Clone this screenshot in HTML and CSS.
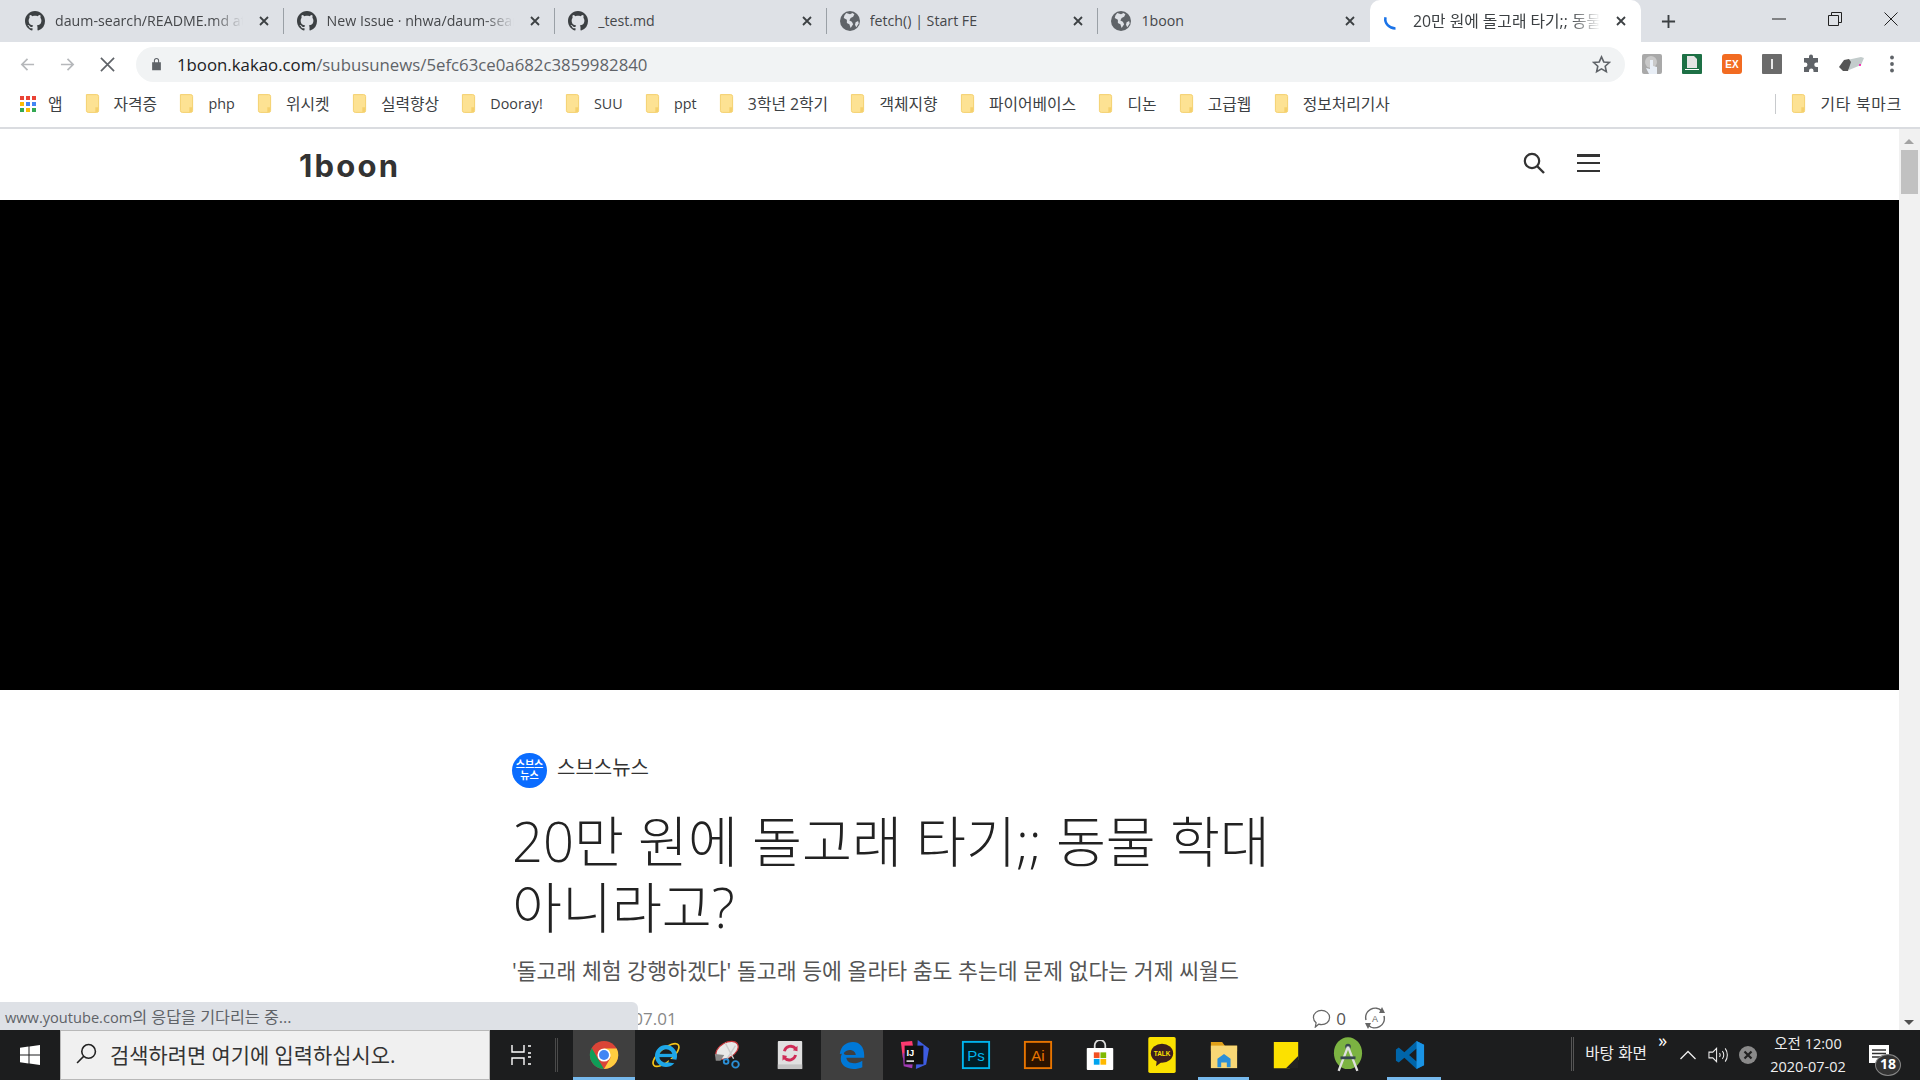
FILE: index.html
```html
<!doctype html>
<html lang="ko">
  <head>
    <meta charset="UTF-8" />
    <title>20만 원에 돌고래 타기;; 동물 학대 아니라고?</title>
    <link rel="stylesheet" href="styles.css">
  </head>
  <body>
    <svg class="defs" width="0" height="0">
      <symbol id="github" viewBox="0 0 16 16">
        <path fill="#3c4043" d="M8 0C3.58 0 0 3.58 0 8c0 3.54 2.29 6.53 5.47 7.59.4.07.55-.17.55-.38 0-.19-.01-.82-.01-1.49-2.01.37-2.53-.49-2.69-.94-.09-.23-.48-.94-.82-1.13-.28-.15-.68-.52-.01-.53.63-.01 1.08.58 1.23.82.72 1.21 1.87.87 2.33.66.07-.52.28-.87.51-1.07-1.78-.2-3.64-.89-3.64-3.95 0-.87.31-1.59.82-2.15-.08-.2-.36-1.02.08-2.12 0 0 .67-.21 2.2.82.64-.18 1.32-.27 2-.27s1.36.09 2 .27c1.53-1.04 2.2-.82 2.2-.82.44 1.1.16 1.92.08 2.12.51.56.82 1.27.82 2.15 0 3.07-1.87 3.75-3.65 3.95.29.25.54.73.54 1.48 0 1.07-.01 1.93-.01 2.2 0 .21.15.46.55.38A8.01 8.01 0 0 0 16 8c0-4.42-3.58-8-8-8z"/>
      </symbol>
      <symbol id="globe" viewBox="0 0 16 16">
        <circle cx="8" cy="8" r="8" fill="#5f6368"/>
        <path fill="#dee1e6" d="M5 1.500l3 1 2-1 1.500 1-1 2-2 1-1 2 2 1 1 2-2 3-1-3-2-1V7L3 5.500l.5-2zM12.500 9l2-1 .5 2-2 3-1-2z"/>
      </symbol>
      <symbol id="folder" viewBox="0 0 16 20">
        <path fill="#fde293" stroke="#f3cf6b" d="M1.500.5h11a2 2 0 0 1 2 2v15a2 2 0 0 1-2 2h-9a2 2 0 0 1-2-2z"/>
        <path fill="#f5d06c" d="M11 14h3v5h-3z"/>
      </symbol>
      <symbol id="close" viewBox="0 0 10 10">
        <path stroke="#3c4043" stroke-width="1.800" d="M1 1l8 8M9 1l-8 8"/>
      </symbol>
    </svg>

    <!-- tabs -->
    <div class="tabstrip">
      <div class="tab">
        <svg class="favicon"><use href="#github"/></svg>
        <span class="tab-title fade">daum-search/README.md at master</span>
        <svg class="tab-close"><use href="#close"/></svg>
      </div>
      <div class="tab">
        <svg class="favicon"><use href="#github"/></svg>
        <span class="tab-title fade">New Issue · nhwa/daum-search</span>
        <svg class="tab-close"><use href="#close"/></svg>
      </div>
      <div class="tab">
        <svg class="favicon"><use href="#github"/></svg>
        <span class="tab-title">_test.md</span>
        <svg class="tab-close"><use href="#close"/></svg>
      </div>
      <div class="tab">
        <svg class="favicon"><use href="#globe"/></svg>
        <span class="tab-title">fetch() | Start FE</span>
        <svg class="tab-close"><use href="#close"/></svg>
      </div>
      <div class="tab last">
        <svg class="favicon"><use href="#globe"/></svg>
        <span class="tab-title">1boon</span>
        <svg class="tab-close"><use href="#close"/></svg>
      </div>
      <div class="tab active">
        <svg class="favicon" viewBox="0 0 16 16"><path fill="none" stroke="#1a73e8" stroke-width="2" d="M2 5c-1 5 3 9 8 9"/></svg>
        <span class="tab-title fade ko">20만 원에 돌고래 타기;; 동물 학대 아니라고?</span>
        <svg class="tab-close"><use href="#close"/></svg>
      </div>
      <svg class="new-tab" viewBox="0 0 16 16"><path stroke="#3c4043" stroke-width="2" d="M8 1v14M1 8h14"/></svg>
      <div class="window-controls">
        <svg viewBox="0 0 14 14"><path stroke="#222" d="M0 7h14"/></svg>
        <svg viewBox="0 0 14 14"><path fill="none" stroke="#222" d="M.500 3.500h10v10H.500zM3.500 3.500v-3h10v10h-3"/></svg>
        <svg viewBox="0 0 14 14"><path stroke="#222" d="M.500.500l13 13M13.500.500l-13 13"/></svg>
      </div>
    </div>

    <!-- toolbar -->
    <div class="toolbar">
      <svg class="nav-icon" viewBox="0 0 16 16"><path fill="none" stroke="#b6b8bb" stroke-width="1.800" d="M15 8H2M8 2L2 8l6 6"/></svg>
      <svg class="nav-icon" viewBox="0 0 16 16"><path fill="none" stroke="#b6b8bb" stroke-width="1.800" d="M1 8h13M8 2l6 6-6 6"/></svg>
      <svg class="nav-icon" viewBox="0 0 16 16"><path stroke="#5f6368" stroke-width="1.800" d="M1 1l14 14M15 1L1 15"/></svg>
      <div class="omnibox">
        <svg class="lock" viewBox="0 0 12 16"><path fill="#5f6368" d="M1 6h10v9H1zM3 6V4a3 3 0 0 1 6 0v2H7.800V4a1.800 1.800 0 0 0-3.600 0v2z"/></svg>
        <span class="url"><b>1boon.kakao.com</b>/subusunews/5efc63ce0a682c3859982840</span>
        <svg class="star" viewBox="0 0 20 20"><path fill="none" stroke="#5f6368" stroke-width="1.700" d="M10 2l2.400 5.300 5.800.6-4.300 3.900 1.200 5.700L10 14.600l-5.100 2.900 1.200-5.700L1.800 7.900l5.800-.6z"/></svg>
      </div>
      <div class="extensions">
        <svg viewBox="0 0 20 20"><rect width="20" height="20" rx="2" fill="#a9a9a9"/><circle cx="9" cy="8" r="6" fill="#c9c9c9"/><path fill="#e8eef6" d="M8 6h3v6l4 1v7H7l-3-6 4 1z"/></svg>
        <svg viewBox="0 0 20 20"><rect width="20" height="20" rx="1" fill="#1d7045"/><path fill="#e4e4e4" d="M5 2h7l3 3v9H5z"/><path fill="#fff" d="M3 15h14v1H3z"/></svg>
        <svg viewBox="0 0 20 20"><rect width="20" height="20" rx="3" fill="#f26b21"/><text class="ext-text" x="10" y="13.500">EX</text></svg>
        <svg viewBox="0 0 20 20"><rect width="20" height="20" rx="1" fill="#6b6b6b"/><path fill="#e8e8e8" d="M9 5h2v10H9z"/></svg>
        <svg viewBox="0 0 20 20"><path fill="#5f6368" d="M7 2.500a2 2 0 0 1 4 0V4h5v4.500h-1.500a2.200 2.200 0 0 0 0 4.500H16v5h-4.500v-1.200a2.200 2.200 0 0 0-4.500 0V18H2v-5h1.200a2.200 2.200 0 0 0 0-4.500H2V4h5z"/></svg>
        <svg class="wide" viewBox="0 0 26 16"><path fill="#c3cccc" d="M8 4l14-3 3 1-3 7-12 5z"/><path fill="#555" d="M0 11l5-7 5-1 2 3-3 9-5 0z"/><circle cx="21" cy="9" r="1" fill="#f0a"/></svg>
        <svg viewBox="0 0 20 20"><g fill="#5f6368"><circle cx="10" cy="3.500" r="1.900"/><circle cx="10" cy="10" r="1.900"/><circle cx="10" cy="16.500" r="1.900"/></g></svg>
      </div>
    </div>

    <!-- bookmarks -->
    <div class="bookmarks">
      <div class="apps">
        <i class="r"></i><i class="r"></i><i class="r"></i>
        <i class="y"></i><i class="b"></i><i class="b"></i>
        <i class="g"></i><i class="y"></i><i class="g"></i>
      </div>
      <span class="apps-label ko">앱</span>
      <div class="bookmark ko"><svg class="folder"><use href="#folder"/></svg>자격증</div>
      <div class="bookmark"><svg class="folder"><use href="#folder"/></svg>php</div>
      <div class="bookmark ko"><svg class="folder"><use href="#folder"/></svg>위시켓</div>
      <div class="bookmark ko"><svg class="folder"><use href="#folder"/></svg>실력향상</div>
      <div class="bookmark"><svg class="folder"><use href="#folder"/></svg>Dooray!</div>
      <div class="bookmark"><svg class="folder"><use href="#folder"/></svg>SUU</div>
      <div class="bookmark"><svg class="folder"><use href="#folder"/></svg>ppt</div>
      <div class="bookmark ko"><svg class="folder"><use href="#folder"/></svg>3학년 2학기</div>
      <div class="bookmark ko"><svg class="folder"><use href="#folder"/></svg>객체지향</div>
      <div class="bookmark ko"><svg class="folder"><use href="#folder"/></svg>파이어베이스</div>
      <div class="bookmark ko"><svg class="folder"><use href="#folder"/></svg>디논</div>
      <div class="bookmark ko"><svg class="folder"><use href="#folder"/></svg>고급웹</div>
      <div class="bookmark ko"><svg class="folder"><use href="#folder"/></svg>정보처리기사</div>
      <div class="bookmark other ko"><svg class="folder"><use href="#folder"/></svg>기타 북마크</div>
    </div>

    <!-- page -->
    <div class="viewport">
      <main class="page">
        <header class="site-header">
          <span class="logo">1boon</span>
          <div class="site-icons">
            <svg class="search-icon" viewBox="0 0 22 22"><circle cx="9" cy="9" r="7.200" fill="none" stroke="#333" stroke-width="2.200"/><path stroke="#333" stroke-width="2.400" d="M14 14l7 7"/></svg>
            <div class="hamburger"><i></i><i></i><i></i></div>
          </div>
        </header>
        <div class="video"></div>
        <article class="article">
          <div class="source">
            <div class="source-logo">스브스<br>뉴스</div>
            <span class="source-name">스브스뉴스</span>
          </div>
          <h1 class="title">20만 원에 돌고래 타기;; 동물 학대 아니라고?</h1>
          <p class="subtitle">'돌고래 체험 강행하겠다' 돌고래 등에 올라타 춤도 추는데 문제 없다는 거제 씨월드</p>
          <div class="meta">
            <span class="date">2020.07.01</span>
            <div class="meta-icons">
              <svg class="comment" viewBox="0 0 20 20"><path fill="none" stroke="#666" stroke-width="1.300" d="M10 1.500c4.500 0 8.500 3 8.500 7.500s-4 7.500-8.500 7.500c-1 0-2-.2-3-.5L3.500 19l.8-4.500C2.500 13 1.500 11 1.500 9c0-4.500 4-7.500 8.500-7.500z"/></svg>
              <span class="count">0</span>
              <svg class="font-size" viewBox="0 0 24 24"><path fill="none" stroke="#666" stroke-width="1.500" d="M3 14A9.500 9.500 0 0 1 19 5M21 10a9.500 9.500 0 0 1-16 9"/><path fill="#666" d="M19 1l3 6-6 0zM5 23l-3-6 6 0z"/><text class="font-a" x="12" y="16">A</text></svg>
            </div>
          </div>
        </article>
        <div class="status-bubble">www.youtube.com<span class="ko">의 응답을 기다리는 중...</span></div>
      </main>
      <div class="scrollbar">
        <span class="arrow up"></span>
        <div class="thumb"></div>
        <span class="arrow down"></span>
      </div>
    </div>

    <!-- taskbar -->
    <footer class="taskbar">
      <div class="start">
        <svg viewBox="0 0 20 20"><path fill="#fff" d="M0 2.800l8.500-1.200v8H0zM9.500 1.400L20 0v9.600H9.500zM0 10.500h8.500v8L0 17.300zM9.500 10.500H20V20L9.500 18.600z"/></svg>
      </div>
      <div class="searchbox">
        <svg viewBox="0 0 20 20"><circle cx="12" cy="8" r="6.500" fill="none" stroke="#222" stroke-width="1.500"/><path stroke="#222" stroke-width="1.500" d="M7.500 12.500L1 19"/></svg>
        <span>검색하려면 여기에 입력하십시오.</span>
      </div>
      <div class="task-view">
        <svg viewBox="0 0 20 20"><path fill="none" stroke="#fff" stroke-width="1.400" d="M1 0v7h12V0M1 20v-7h12v7M17 1h3M17 8h3M17 12h3M17 19h3"/></svg>
      </div>
      <div class="task-sep"></div>
      <div class="task-icons">
        <div class="task-icon hl running">
          <svg viewBox="0 0 32 32"><circle cx="16" cy="16" r="15" fill="#db4437"/><path fill="#0f9d58" d="M3 8.500L9.500 20l6.500 11A15 15 0 0 1 3 8.500z"/><path fill="#ffcd40" d="M16 9h13.500A15 15 0 0 1 16 31l7-12z"/><circle cx="16" cy="16" r="7" fill="#fff"/><circle cx="16" cy="16" r="5.300" fill="#4285f4"/></svg>
        </div>
        <div class="task-icon">
          <svg viewBox="0 0 32 32"><ellipse cx="16" cy="16" rx="17" ry="7" transform="rotate(-40 16 16)" fill="none" stroke="#f5c518" stroke-width="1.800"/><circle cx="16" cy="17" r="9.500" fill="none" stroke="#1ea7e8" stroke-width="4.500"/><path stroke="#1ea7e8" stroke-width="3.500" d="M8 16.500h16"/><path stroke="#1c1d1e" stroke-width="4" d="M19 22l8 1"/></svg>
        </div>
        <div class="task-icon">
          <svg viewBox="0 0 32 32"><ellipse cx="15" cy="11" rx="13" ry="8" transform="rotate(-30 15 11)" fill="#e8e8e8" stroke="#c8363a" stroke-width="1.200"/><path fill="#888" d="M2 15l10 1-4 6H3z"/><path stroke="#ccc" stroke-width="1.500" d="M13 3l9 17M24 6l-9 14"/><circle cx="24" cy="26" r="3.500" fill="none" stroke="#2b8fd6" stroke-width="2"/><circle cx="14" cy="23" r="2.500" fill="none" stroke="#2b8fd6" stroke-width="2"/></svg>
        </div>
        <div class="task-icon">
          <svg viewBox="0 0 32 32"><rect x="3" y="1" width="26" height="30" rx="1" fill="#e0e0e0"/><rect x="3" y="26" width="26" height="5" fill="#c4c4c4"/><path fill="none" stroke="#cf2b55" stroke-width="3" d="M22 9a7 7 0 0 0-12 3M10 19a7 7 0 0 0 12-3"/><path fill="#cf2b55" d="M19 11l5 1 0-6zM13 17l-5-1 0 6z"/></svg>
        </div>
        <div class="task-icon hl">
          <svg viewBox="0 0 32 32"><path fill="#0078d7" d="M3 15C4 6 10 2 17 2c7 0 12 5 12 14v3H10c.5 6 9 8 17 3v7c-9 4-23 2-23-9 0-3 1-6 3-8 0 3 1 4 3 4h10c0-5-8-8-13-2z"/></svg>
        </div>
        <div class="task-icon">
          <svg viewBox="0 0 32 32"><path fill="#fd3a70" d="M2 2l12-1 2 12-12 6z"/><path fill="#3d5ce0" d="M20 0l12 9-3 17-11 5z"/><path fill="#a13bb5" d="M4 14l12 0-2 16-9-2z"/><rect x="6" y="6" width="20" height="20" fill="#111"/><text class="ij" x="8" y="17">IJ</text><path stroke="#fff" stroke-width="1.500" d="M8 22.500h8"/></svg>
        </div>
        <div class="task-icon">
          <svg viewBox="0 0 32 32"><rect x="2" y="2" width="28" height="28" fill="#001d26" stroke="#00b5ee" stroke-width="2"/><text class="app-letters ps" x="16" y="22">Ps</text></svg>
        </div>
        <div class="task-icon">
          <svg viewBox="0 0 32 32"><rect x="2" y="2" width="28" height="28" fill="#2b1300" stroke="#e87500" stroke-width="2"/><text class="app-letters ai" x="16" y="22">Ai</text></svg>
        </div>
        <div class="task-icon">
          <svg viewBox="0 0 32 34"><path fill="none" stroke="#ddd" stroke-width="2" d="M10 9V6a6 6 0 0 1 12 0v3"/><rect x="1" y="9" width="30" height="25" rx="1" fill="#fff"/><path fill="#f25022" d="M9 14h6.500v6.500H9z"/><path fill="#7fba00" d="M16.500 14H23v6.500h-6.500z"/><path fill="#00a4ef" d="M9 21.500h6.500V28H9z"/><path fill="#ffb900" d="M16.500 21.500H23V28h-6.500z"/></svg>
        </div>
        <div class="task-icon">
          <svg viewBox="0 0 32 42" class="tall"><rect width="32" height="42" rx="2" fill="#fae100"/><ellipse cx="16" cy="19" rx="13" ry="11" fill="#3c1e1e"/><path fill="#3c1e1e" d="M10 27l-1 7 7-5z"/><text class="talk" x="16" y="22">TALK</text></svg>
        </div>
        <div class="task-icon running narrow">
          <svg viewBox="0 0 32 32"><path fill="#e0a019" d="M2 2h12l3 4h13v6H2z"/><rect x="2" y="6" width="28" height="24" fill="#f8d775"/><path fill="#2a8fd8" d="M9 20l7-5 7 5v9h-4v-5h-6v5H9z"/></svg>
        </div>
        <div class="task-icon">
          <svg viewBox="0 0 32 32"><path fill="#fce100" d="M3 2h26v19l-9 9H3z"/><path fill="#222" d="M29 17v13H16z"/></svg>
        </div>
        <div class="task-icon">
          <svg viewBox="0 0 32 38" class="tall"><ellipse cx="16" cy="17" rx="15" ry="17" fill="#7cb342"/><circle cx="16" cy="10" r="3" fill="#37474f"/><path fill="none" stroke="#e0e0e0" stroke-width="2.500" d="M16 10L6 36M16 10l10 26"/><path stroke="#37474f" stroke-width="3" d="M8 22h16"/></svg>
        </div>
        <div class="task-icon running vscode">
          <svg viewBox="0 0 32 32"><path fill="#0065a9" d="M23 1l8 4v22l-8 4-13-12-6 5-3-2v-12l3-2 6 5zM23 9l-8 7 8 7z"/><path fill="#1f9cf0" d="M23 1l8 4v22l-8 4z" opacity=".85"/></svg>
        </div>
      </div>
      <div class="tray">
        <div class="desktop-label">바탕 화면</div>
        <span class="chevrons">»</span>
        <svg class="tray-up" viewBox="0 0 16 10"><path fill="none" stroke="#eee" stroke-width="1.300" d="M.500 9L8 1.500 15.500 9"/></svg>
        <svg class="tray-speaker" viewBox="0 0 22 18"><path fill="none" stroke="#eee" stroke-width="1.100" d="M1 6h4l4-4v14l-4-4H1zM12 7c1 1 1 3 0 4M15 5c2 2 2 6 0 8M18 2c3 4 3 10 0 14"/></svg>
        <svg class="tray-x" viewBox="0 0 18 18"><circle cx="9" cy="9" r="9" fill="#8a8a8a"/><path stroke="#222" stroke-width="2.200" d="M5.500 5.500l7 7M12.500 5.500l-7 7"/></svg>
        <div class="clock"><span>오전 12:00</span><span>2020-07-02</span></div>
        <div class="notify">
          <svg viewBox="0 0 20 18"><path fill="#fff" d="M0 0h20v18H0z"/><path stroke="#333" stroke-width="1.300" d="M3 5h14M3 8.500h14M3 12h9"/></svg>
          <span class="notify-count">18</span>
        </div>
      </div>
    </footer>
  </body>
</html>
```

FILE: styles.css
```css
* {
  margin: 0;
  padding: 0;
  box-sizing: border-box;
}
html, body {
  width: 1920px;
  height: 1080px;
  overflow: hidden;
}
body {
  font-family: "Open Sans", "Noto Sans CJK KR", sans-serif;
  display: flex;
  flex-direction: column;
  background: #fff;
}
.defs {
  position: absolute;
}
/* korean runs sit wider in the screenshot than the latin next to them */
.ko {
  font-size: 15.800px;
}

/* tabs */
.tabstrip {
  height: 42px;
  background: #dee1e6;
  display: flex;
  align-items: stretch;
  padding-left: 12px;
  flex-shrink: 0;
}
.tab {
  width: 271.600px;
  display: flex;
  align-items: center;
  padding: 0 15px 0 13px;
  position: relative;
  font-size: 14.200px;
  color: #45474a;
}
.tab::after {
  content: "";
  position: absolute;
  right: 0;
  top: 8px;
  height: 26px;
  width: 1px;
  background: #9aa0a6;
}
.tab.last::after,
.tab.active::after {
  display: none;
}
.tab.active {
  width: 271px;
  background: #fff;
  border-radius: 10px 10px 0 0;
  color: #3c4043;
}
.favicon {
  width: 20px;
  height: 20px;
  flex-shrink: 0;
  margin-right: 10px;
}
.tab-title {
  flex: 1;
  overflow: hidden;
  white-space: nowrap;
  padding-bottom: 1px;
}
.fade {
  -webkit-mask-image: linear-gradient(to right, #000 82%, transparent 98%);
  mask-image: linear-gradient(to right, #000 82%, transparent 98%);
}
.tab-close {
  width: 10px;
  height: 10px;
  margin-left: 12px;
  flex-shrink: 0;
}
.new-tab {
  width: 15px;
  height: 15px;
  margin: 14px 0 0 20px;
}
.window-controls {
  margin-left: auto;
  display: flex;
  gap: 42px;
  padding: 12px 22px 0 0;
}
.window-controls svg {
  width: 14px;
  height: 14px;
}

/* toolbar */
.toolbar {
  height: 44px;
  display: flex;
  align-items: center;
  padding-left: 20px;
  flex-shrink: 0;
}
.nav-icon {
  width: 15px;
  height: 15px;
  margin-right: 25px;
}
.omnibox {
  width: 1489px;
  height: 35px;
  margin-left: -4px;
  background: #f1f3f4;
  border-radius: 18px;
  display: flex;
  align-items: center;
  padding: 0 14px 0 15px;
}
.lock {
  width: 11px;
  height: 14px;
  margin-right: 15px;
}
.url {
  flex: 1;
  font-size: 16.800px;
  color: #5f6368;
}
.url b {
  font-weight: 400;
  color: #202124;
}
.star {
  width: 19px;
  height: 19px;
}
.extensions {
  display: flex;
  align-items: center;
  gap: 20px;
  margin-left: 17px;
}
.extensions svg {
  width: 20px;
  height: 20px;
}
.extensions .wide {
  width: 26px;
  margin: 0 -3px;
}
.ext-text {
  font: bold 10px "Liberation Sans", sans-serif;
  fill: #fff;
  text-anchor: middle;
}

/* bookmarks */
.bookmarks {
  height: 43px;
  border-bottom: 2px solid #dadce0;
  display: flex;
  align-items: center;
  padding: 0 0 6px 20px;
  font-size: 14.300px;
  color: #3c4043;
  flex-shrink: 0;
}
.apps {
  width: 16px;
  height: 16px;
  display: grid;
  grid-template-columns: repeat(3, 4px);
  grid-template-rows: repeat(3, 4px);
  gap: 2px;
}
.apps i.r { background: #ea4335; }
.apps i.y { background: #fbbc04; }
.apps i.b { background: #4285f4; }
.apps i.g { background: #34a853; }
.apps-label {
  margin: 0 22px 0 12px;
}
.bookmark {
  display: flex;
  align-items: center;
  margin-right: 22.300px;
  white-space: nowrap;
}
.folder {
  width: 15px;
  height: 19px;
  margin-right: 14px;
}
.bookmark.other {
  margin: 0 0 0 auto;
  padding: 0 18px 0 15px;
  border-left: 1px solid #c8cacd;
  height: 20px;
  letter-spacing: .8px;
}

/* page */
.viewport {
  flex: 1;
  display: flex;
  min-height: 0;
}
.page {
  flex: 1;
  position: relative;
  overflow: hidden;
}
.site-header {
  height: 71px;
  display: flex;
  align-items: center;
  justify-content: space-between;
  padding: 0 299px 0 299px;
}
.logo {
  font: 700 31px "Inter", sans-serif;
  letter-spacing: 2.200px;
  color: #333;
  padding-top: 2px;
}
.site-icons {
  display: flex;
  align-items: center;
  gap: 32px;
  margin-bottom: 3px;
}
.search-icon {
  width: 22px;
  height: 22px;
}
.hamburger {
  width: 23px;
  height: 18px;
  display: flex;
  flex-direction: column;
  justify-content: space-between;
}
.hamburger i {
  height: 2.500px;
  background: #333;
}
.video {
  height: 490px;
  background: #000;
}
.article {
  padding: 63px 0 0 512px;
  width: 1320px;
}
.source {
  display: flex;
  align-items: center;
  gap: 10px;
  height: 35px;
}
.source-logo {
  width: 35px;
  height: 35px;
  border-radius: 50%;
  background: #0a6cff;
  color: #fff;
  font-size: 10px;
  font-weight: 700;
  line-height: 11px;
  text-align: center;
  padding-top: 6px;
}
.source-name {
  font-size: 20px;
  color: #333;
  margin-bottom: 8px;
}
.title {
  font-weight: 300;
  font-size: 54.300px;
  line-height: 66px;
  color: #222;
  margin-top: 20px;
  width: 790px;
}
.subtitle {
  font-size: 21.600px;
  line-height: 30px;
  color: #555;
  margin-top: 16px;
  white-space: nowrap;
}
.meta {
  display: flex;
  align-items: center;
  justify-content: space-between;
  margin-top: 20px;
  font-size: 17px;
  color: #888;
  width: 875px;
}
.date {
  padding-left: 78px;
}
.meta-icons {
  display: flex;
  align-items: center;
  gap: 5px;
}
.comment {
  width: 19px;
  height: 19px;
}
.count {
  color: #555;
  margin-right: 12px;
}
.font-size {
  width: 24px;
  height: 24px;
}
.font-a {
  font: 9px "Liberation Sans", sans-serif;
  fill: #666;
  text-anchor: middle;
}
.status-bubble {
  position: absolute;
  left: 0;
  bottom: 0;
  width: 638px;
  height: 28px;
  background: #dee1e6;
  border-top-right-radius: 6px;
  font-size: 14.600px;
  color: #5f6368;
  padding: 2px 0 0 5px;
  white-space: nowrap;
}
.status-bubble .ko {
  font-size: 16.200px;
}
.scrollbar {
  width: 21px;
  background: #f1f1f1;
  position: relative;
  padding: 21px 2px 0;
  flex-shrink: 0;
}
.thumb {
  height: 44px;
  background: #c1c1c1;
}
.arrow {
  position: absolute;
  left: 5px;
  width: 0;
  height: 0;
  border-left: 5px solid transparent;
  border-right: 5px solid transparent;
}
.arrow.up {
  top: 10px;
  border-bottom: 5px solid #a3a3a3;
}
.arrow.down {
  bottom: 5px;
  border-top: 5px solid #505050;
}

/* taskbar */
.taskbar {
  height: 50px;
  background: #1c1d1e;
  display: flex;
  align-items: stretch;
  flex-shrink: 0;
}
.start {
  width: 60px;
  display: flex;
  align-items: center;
  justify-content: center;
}
.start svg {
  width: 20px;
  height: 20px;
}
.searchbox {
  width: 430px;
  background: #f0f0f0;
  border: 1px solid #b8b8b8;
  display: flex;
  align-items: center;
  padding: 0 0 3px 15px;
  font-size: 20.900px;
  color: #333;
}
.searchbox svg {
  width: 21px;
  height: 21px;
  margin-right: 13px;
}
.task-view {
  width: 62px;
  display: flex;
  align-items: center;
  justify-content: center;
}
.task-view svg {
  width: 20px;
  height: 20px;
}
.task-sep {
  width: 3px;
  height: 34px;
  margin: 8px 15px 0 3px;
  border-left: 1px solid #4a4a4a;
  border-right: 1px solid #4a4a4a;
}
.task-icons {
  display: flex;
}
.task-icon {
  width: 62px;
  display: flex;
  align-items: center;
  justify-content: center;
  position: relative;
}
.task-icon.hl {
  background: #3f3f3f;
}
.task-icon.running::after {
  content: "";
  position: absolute;
  left: 0;
  right: 0;
  bottom: 0;
  height: 3px;
  background: #76b9ed;
}
.task-icon.narrow::after {
  left: 5px;
  right: 6px;
}
.task-icon.vscode::after {
  left: 8px;
  right: 0;
}
.task-icon svg {
  width: 30px;
  height: 30px;
}
.task-icon svg.tall {
  height: 36px;
}
.ij {
  font: bold 10px "Liberation Sans", sans-serif;
  fill: #fff;
}
.app-letters {
  font: 16px "Liberation Sans", sans-serif;
  text-anchor: middle;
}
.ps { fill: #00b5ee; }
.ai { fill: #e87500; }
.talk {
  font: bold 7.500px "Liberation Sans", sans-serif;
  fill: #fae100;
  text-anchor: middle;
}
.tray {
  margin-left: auto;
  display: flex;
  align-items: center;
  color: #eee;
  position: relative;
}
.desktop-label {
  font-size: 15.700px;
  border-left: 3px double #555;
  height: 34px;
  line-height: 32px;
  padding: 0 12px 0 11px;
  margin-top: -2px;
  white-space: nowrap;
}
.chevrons {
  position: absolute;
  left: 87px;
  top: -2px;
  font-size: 18px;
  color: #fff;
}
.tray-up {
  width: 16px;
  height: 10px;
  margin-left: 21px;
}
.tray-speaker {
  width: 21px;
  height: 18px;
  margin-left: 12px;
}
.tray-x {
  width: 18px;
  height: 18px;
  margin-left: 10px;
}
.clock {
  display: flex;
  flex-direction: column;
  align-items: center;
  font-size: 14.500px;
  line-height: 23px;
  width: 90px;
  margin-left: 6px;
  white-space: nowrap;
}
.notify {
  width: 67px;
  height: 50px;
  position: relative;
}
.notify svg {
  position: absolute;
  left: 16px;
  top: 15px;
  width: 20px;
  height: 18px;
}
.notify-count {
  position: absolute;
  left: 22px;
  top: 24px;
  width: 26px;
  height: 22px;
  border: 1.500px solid #888;
  border-radius: 50%;
  background: #333;
  color: #fff;
  font-size: 14px;
  font-weight: 700;
  line-height: 18px;
  text-align: center;
}
```
